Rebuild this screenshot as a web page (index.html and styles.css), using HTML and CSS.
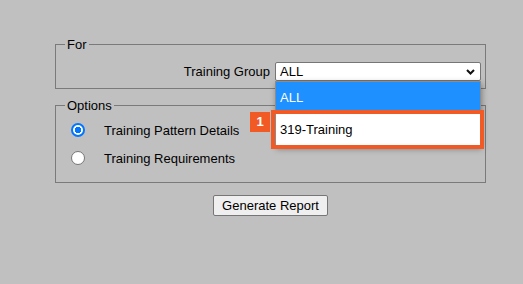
FILE: index.html
```html
<!DOCTYPE html>
<html lang="en">
<head>
	<meta charset="UTF-8">
	<title>Training Report</title>
	<link rel="stylesheet" href="styles.css">
</head>
<body>
	<div class="report">
		<fieldset class="box-for">
			<legend>For</legend>
			<div class="group-row">
				<span class="lbl">Training Group</span>
				<div class="select-wrap">
					<div class="select">
						<span>ALL</span>
						<svg width="9" height="6" viewBox="0 0 9 6"><path d="M1 1 L4.5 4.5 L8 1" fill="none" stroke="#111" stroke-width="2"/></svg>
					</div>
					<div class="popup">
						<div class="opt opt-sel">ALL</div>
						<div class="opt">319-Training</div>
						<div class="mark"></div>
						<div class="badge">1</div>
					</div>
				</div>
			</div>
		</fieldset>
		<fieldset class="box-opt">
			<legend>Options</legend>
			<label class="radio-row"><input type="radio" name="rep" checked><span>Training Pattern Details</span></label>
			<label class="radio-row"><input type="radio" name="rep"><span>Training Requirements</span></label>
		</fieldset>
		<div class="actions">
			<button class="btn">Generate Report</button>
		</div>
	</div>
</body>
</html>
```
FILE: styles.css
```css
*{
	box-sizing: border-box;
}
body{
	margin: 0;
	background: #c0c0c0;
	font: 13px "Liberation Sans", Arial, sans-serif;
	color: #000;
}
.report{
	width: 431px;
	margin-left: 55px;
	padding-top: 37px;
}
fieldset{
	margin: 0;
	border: 1px solid #7a7a7a;
	padding: 10px 4px 7px 9px;
}
legend{
	padding: 0 2px;
	line-height: 15px;
}
.group-row{
	display: flex;
	justify-content: flex-end;
	align-items: center;
	gap: 5px;
}
.select-wrap{
	position: relative;
}
.select{
	width: 206px;
	height: 19px;
	border: 1px solid #767676;
	border-radius: 2px;
	background: #fff;
	padding: 0 5px 0 4px;
	display: flex;
	justify-content: space-between;
	align-items: center;
}
.popup{
	position: absolute;
	left: 0;
	top: 100%;
	width: 206px;
	background: #fff;
	border: 1px solid #8c8c8c;
	box-shadow: 1px 2px 6px rgba(0,0,0,0.35);
}
.opt{
	height: 32px;
	line-height: 32px;
	padding-left: 4px;
}
.opt-sel{
	background: #1e90ff;
	color: #fff;
}
.mark{
	position: absolute;
	left: -5px;
	top: 28px;
	width: 213px;
	height: 39px;
	border: 4px solid #f15a24;
}
.badge{
	position: absolute;
	left: -26px;
	top: 30px;
	width: 20px;
	height: 20px;
	background: #f15a24;
	color: #fff;
	font-weight: bold;
	text-align: center;
	line-height: 20px;
}
.box-opt{
	margin-top: 9px;
	padding: 3px 4px 10px 9px;
}
.radio-row{
	display: flex;
	align-items: center;
	height: 28px;
	gap: 19px;
}
.radio-row input{
	appearance: none;
	margin: 0 0 0 6px;
	width: 14px;
	height: 14px;
	border: 1px solid #767676;
	border-radius: 50%;
	background: #fff;
}
.radio-row input:checked{
	border: 2px solid #0075ff;
	background: radial-gradient(circle, #0075ff 0 3px, #fff 3.5px);
}
.actions{
	display: flex;
	justify-content: center;
	margin-top: 12px;
}
.btn{
	font: inherit;
	height: 21px;
	padding: 0 8px;
	border: 1px solid #767676;
	border-radius: 2px;
	background: #efefef;
	color: #000;
}
```
